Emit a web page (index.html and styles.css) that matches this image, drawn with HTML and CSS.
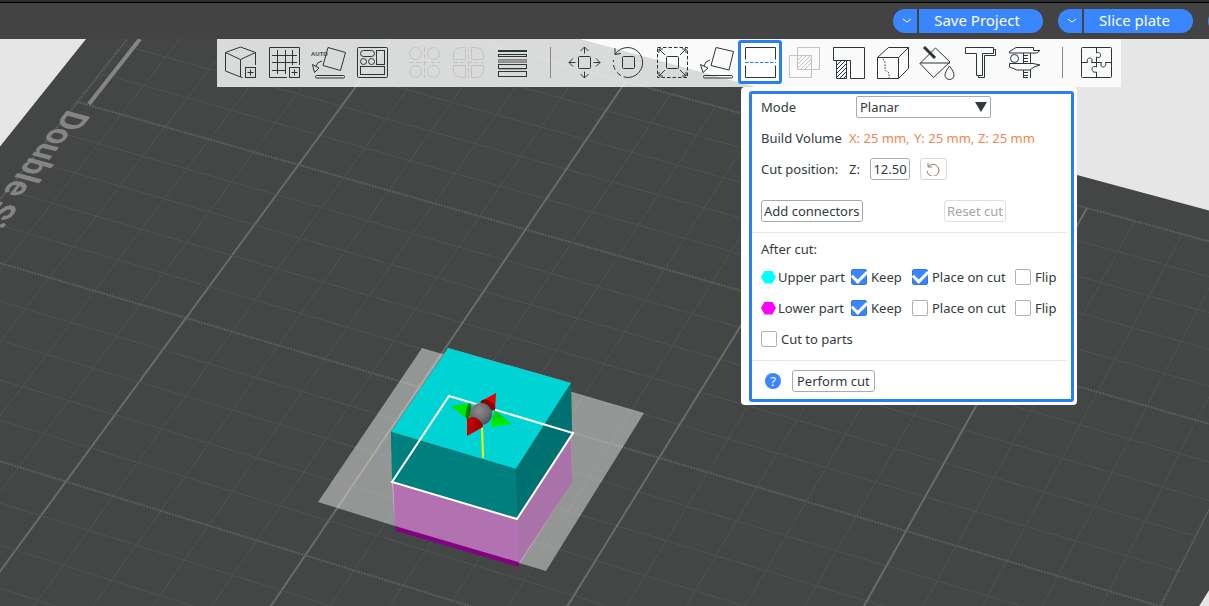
FILE: index.html
```html
<!DOCTYPE html>
<html lang="en">
<head>
<meta charset="utf-8">
<title>Cut tool</title>
<link rel="stylesheet" href="styles.css">
</head>
<body>
<header class="topbar">
  <div class="split">
    <button class="split-menu" aria-label="Save options"><svg width="10" height="6" viewBox="0 0 10 6"><path d="M1 1 5 4 9 1"/></svg></button>
    <button class="split-main save">Save Project</button>
  </div>
  <div class="split">
    <button class="split-menu" aria-label="Slice options"><svg width="10" height="6" viewBox="0 0 10 6"><path d="M1 1 5 4 9 1"/></svg></button>
    <button class="split-main slice">Slice plate</button>
  </div>
  <div class="split next"><button class="split-menu" aria-label="Print options"></button></div>
</header>

<main class="viewport">
  <svg class="scene" viewBox="0 39 1209 567" preserveAspectRatio="xMinYMin slice" role="img" aria-label="Build plate with a cube being cut">
    <defs>
      <radialGradient id="ball" cx=".42" cy=".35" r=".7"><stop offset="0" stop-color="#8d8d8d"/><stop offset=".6" stop-color="#6b6b6b"/><stop offset="1" stop-color="#4a4a4a"/></radialGradient>
      <linearGradient id="redcone"><stop offset="0" stop-color="#c80000"/><stop offset="1" stop-color="#9c0000"/></linearGradient>
      <linearGradient id="greencone" x2="0" y2="1"><stop offset="0" stop-color="#00c800"/><stop offset="1" stop-color="#00f400"/></linearGradient>
    </defs>
    <polygon class="plate" points="-2,149 86,39 580,39 1077,175 1211,211 1211,587 1198,608 -2,608"/>
    <g id="grid"></g>
    <path class="plate-bar" d="M140 39 89 104"/>
    <text class="plate-text" transform="matrix(-.62 .785 -.965 -.262 68 109)">Double Si</text>
    <polygon class="bottom-strip" points="395,525 519,561 519,567 396,531"/>
    <polygon fill="#b272b2" points="392,482 518,519 518,562 395,526"/>
    <polygon fill="#a972a9" points="518,519 572,432 572,482 520,563 518,562"/>
    <path class="cut-plane" fill-rule="evenodd" d="M422 348 644 413 546 571 519 563 572 482 571 383 448 348 391 432 395 526 318 502Z"/>
    <polygon fill="#00d3d3" points="448,348 571,383 516,469 391,432"/>
    <polygon fill="#007f7f" points="391,432 516,469 518,519 392,482"/>
    <polygon fill="#007171" points="571,383 516,469 518,519 572,433"/>
    <polygon class="cut-outline" points="449,396 573,433 517,519 392,482"/>
    <path d="M482 426 483 458" stroke="#f5f500" stroke-width="2"/>
    <path d="M480 402 496 393 495 411Z" fill="#e60000"/>
    <ellipse cx="488" cy="405" rx="8" ry="4.500" fill="#8b0000" transform="rotate(30 488 405)"/>
    <path d="M451 406 470 403 467 419Z" fill="#00e800"/>
    <ellipse cx="468.500" cy="411" rx="2.500" ry="8" fill="#007f00" transform="rotate(10 468.500 411)"/>
    <circle cx="481" cy="414" r="11" fill="url(#ball)"/>
    <path d="M496 411 512 424 491 427Q491 417 496 411Z" fill="url(#greencone)"/>
    <path d="M467 436 467 419Q472 415 478 419 483 423 483 427Z" fill="url(#redcone)"/>
  </svg>

  <nav class="toolbar" aria-label="Tools">
    <button class="tool" aria-label="Add"><svg viewBox="0 0 32 32"><path d="M16.500 1 1.500 6.500V25l15 6V13.500L1.500 6.500M16.500 1l15 5.500V19M31.500 6.500l-15 7"/><rect x="21.500" y="21.500" width="10" height="10"/><path d="M23.500 26.500h6M26.500 23.500v6M16.500 31l2 .5"/></svg></button>
    <button class="tool" aria-label="Add plate"><svg viewBox="0 0 32 32"><path d="M31.500 19V1.500h-30v30H19M9.500 4v24M17.500 4v24M24.500 4v15M4 9.500h25M4 16.500h25M4 24.500h14"/><rect x="21.500" y="21.500" width="10" height="10"/><path d="M23.500 26.500h6M26.500 23.500v6"/></svg></button>
    <button class="tool" aria-label="Auto orient"><svg viewBox="0 0 32 32"><text class="auto" x="-1" y="10">AUTO</text><path d="M16 1.500 33.500 6.500 28.500 24.500 11 19.500ZM10 15Q5 16 4 20M.5 18.500 7 22 2.500 26.500Z"/><rect x="3.500" y="29.500" width="29" height="2.500" rx="1"/></svg></button>
    <button class="tool" aria-label="Arrange"><svg viewBox="0 0 32 32"><rect x="1.500" y="1.500" width="30" height="30" rx="1"/><rect x="4.500" y="4.500" width="14" height="6" rx="3"/><rect x="20.500" y="4.500" width="8" height="14"/><circle cx="7.500" cy="15.500" r="3"/><circle cx="15.500" cy="15.500" r="3"/><rect x="4.500" y="20.500" width="24" height="8"/></svg></button>
    <span class="space"></span>
    <button class="tool" disabled aria-label="Split to objects"><svg viewBox="0 0 32 32"><circle cx="7.500" cy="7.500" r="6"/><circle cx="25.500" cy="7.500" r="6"/><circle cx="7.500" cy="25.500" r="6"/><circle cx="25.500" cy="25.500" r="6"/><path stroke-dasharray="5 2" d="M16.500 1v31M1 16.500h31"/></svg></button>
    <button class="tool" disabled aria-label="Split to parts"><svg viewBox="0 0 32 32"><path d="M13.500 1.500v12h-12V9Q2 2 9 1.500ZM19.500 1.500v12h12V9Q31 2 24 1.500ZM13.500 31.500v-12h-12V24Q2 31 9 31.500ZM19.500 31.500v-12h12V24Q31 31 24 31.500Z"/><path stroke-dasharray="5 2" d="M16.500 1v31M1 16.500h31"/></svg></button>
    <button class="tool" aria-label="Layer height"><svg viewBox="0 0 32 32"><path stroke-width="2" d="M2 5h29"/><rect x="2.500" y="8.500" width="28" height="2"/><rect x="2.500" y="13.500" width="28" height="3" fill="#999" stroke="#888"/><rect x="2.500" y="18.500" width="28" height="4"/><path stroke="#aaa" d="M3 23.500h27"/><rect x="2.500" y="25.500" width="28" height="5"/></svg></button>
    <span class="rule"></span>
    <button class="tool" aria-label="Move"><svg viewBox="0 0 32 32"><rect x="10.500" y="10.500" width="12" height="12" rx="1"/><path d="M16.500 7.500V1M12.500 5l4-4 4 4M16.500 25.500V32M12.500 28l4 4 4-4M7.500 16.500H1M5 12.500l-4 4 4 4M25.500 16.500H32M28 12.500l4 4-4 4"/></svg></button>
    <button class="tool" aria-label="Rotate"><svg viewBox="0 0 32 32"><rect x="10.500" y="10.500" width="12" height="12" rx="1"/><path d="M3 8.500A15 15 0 1 1 16.500 31.500M3 2v6.500l6-1"/><path stroke-dasharray="5 3" d="M16.500 31.500A15 15 0 0 1 1.500 14"/></svg></button>
    <button class="tool" aria-label="Scale"><svg viewBox="0 0 32 32"><rect x="1.500" y="1.500" width="30" height="30" stroke-dasharray="3.500 2"/><rect x="10.500" y="10.500" width="12" height="12" rx="1"/><path d="M9 9 3 3M3 7V3h4M24 9l6-6M26 3h4v4M9 24l-6 6M3 26v4h4M24 24l6 6M26 30h4v-4"/></svg></button>
    <button class="tool" aria-label="Lay on face"><svg viewBox="0 0 32 32"><path d="M16 1.500 33.500 5.500 29 24 11 19.500ZM10 14Q5 15 4 20M.5 18.500 8 22 3 26.500Z"/><rect x="3.500" y="29.500" width="29" height="2.500" rx="1"/></svg></button>
    <button class="tool active" aria-label="Cut" aria-pressed="true"><svg viewBox="0 0 32 32"><path d="M1.500 13.500v-12h30v12M1.500 19.500v12h30v-12"/><path stroke="#267ff5" stroke-dasharray="3.500 1.500" d="M1 16.500h31"/></svg></button>
    <button class="tool" disabled aria-label="Mesh boolean"><svg viewBox="0 0 32 32"><rect x="9.500" y="1.500" width="22" height="22"/><rect x="1.500" y="9.500" width="22" height="22"/><path d="M10 14l4-4M10 18l8-8M10 22l12-12M13 23l10-10M17 23l6-6"/></svg></button>
    <button class="tool" aria-label="Supports painting"><svg viewBox="0 0 32 32"><path d="M1.500 1.500h31v31h-14v-18h-17Z"/><path d="M4.500 14.500v18h10v-18M5 19l4-4M5 23l8-8M5 27l9-9M5 31l9-9M8 32l6-6M12 32l2-2"/></svg></button>
    <button class="tool" aria-label="Seam painting"><svg viewBox="0 0 32 32"><path d="M1.500 11.500h21v21h-21ZM1.500 11.500l11-10h20l-10 10M32.500 1.500v21l-10 10"/><path stroke-dasharray="1.500 1.500" d="M7 13l2 3v8l4 3v5"/></svg></button>
    <button class="tool" aria-label="Color painting"><svg viewBox="0 0 32 32"><path d="M15.500 2 30 16 13.500 31.500 0 17.500ZM0 17h30"/><path stroke-width="3" d="M4 1l11 11"/><path d="M29.500 20Q25 26 25 29a4.500 4.500 0 0 0 9 0Q34 26 29.500 20Z" fill="#fafafa"/></svg></button>
    <button class="tool" aria-label="Text"><svg viewBox="0 0 32 32"><path d="M1.500 1.500h28v6h-11v22h-6v-22h-11Z"/><path d="M29.500 3.500h2v6h-11v22h-6v-2"/></svg></button>
    <button class="tool" aria-label="Measure"><svg viewBox="0 0 32 32"><path d="M1.500 5.500 8 1.500h17.500v3H32l-3 2.500H1.500ZM1.500 17.500H25l7 1.500-6 2-4 3H9l-7.500-3ZM15.500 7v10M22.500 7v10M15.500 24v8M22.500 24v8M16 9.500h4M16 12.500h4M16 15.500h4M16 26.500h4M16 29.500h4M16 31.500h4"/><circle cx="6.500" cy="12.500" r="4"/></svg></button>
    <span class="rule"></span>
    <button class="tool" aria-label="Assembly view"><svg viewBox="0 0 32 32"><rect x="1.500" y="1.500" width="30" height="30" rx="1"/><path d="M16.500 1.500V7c5-3 6 7 0 4v5.500H11.500c3-6-6-6-4 0h-6M16.500 16.500h5c-3 6 6 6 4 0h6M16.500 16.500V21c-6-3-6 7 0 5v5.500"/></svg></button>
  </nav>

  <section class="panel" aria-label="Cut">
    <div class="panel-frame">
      <div class="fields">
        <div class="row mode-row">
          <label for="mode">Mode</label>
          <div class="select-box">
            <select id="mode"><option>Planar</option><option>Dovetail</option></select>
            <svg width="12" height="10" viewBox="0 0 12 10"><path d="M0 0h12L6 10Z"/></svg>
          </div>
        </div>
        <div class="row field-row"><span>Build Volume</span><div class="volume"><span>X: 25 mm,</span><span>Y: 25 mm,</span><span>Z: 25 mm</span></div></div>
        <div class="row field-row">
          <span>Cut position:</span>
          <div class="position">
            <label for="z">Z:</label>
            <input class="number" id="z" type="text" value="12.50">
            <button class="btn undo" aria-label="Reset position"><svg width="14" height="14" viewBox="0 0 14 14"><path d="M2 1v4h4M2 5a6 6 0 1 1-1 4"/></svg></button>
          </div>
        </div>
      </div>
      <div class="actions"><button class="btn">Add connectors</button><button class="btn reset" disabled>Reset cut</button></div>
      <hr>
      <div class="row after">After cut:</div>
      <div class="parts">
        <div class="row part-row">
          <span class="part"><i class="hex upper"></i>Upper part</span>
          <label class="check"><input type="checkbox" checked>Keep</label>
          <label class="check"><input type="checkbox" checked>Place on cut</label>
          <label class="check"><input type="checkbox">Flip</label>
        </div>
        <div class="row part-row">
          <span class="part"><i class="hex lower"></i>Lower part</span>
          <label class="check"><input type="checkbox" checked>Keep</label>
          <label class="check"><input type="checkbox">Place on cut</label>
          <label class="check"><input type="checkbox">Flip</label>
        </div>
        <div class="row"><label class="check"><input type="checkbox">Cut to parts</label></div>
      </div>
      <hr>
      <div class="footer"><button class="help" aria-label="Help">?</button><button class="btn perform">Perform cut</button></div>
    </div>
  </section>
</main>
<script src="grid.js"></script>
</body>
</html>
```
FILE: styles.css
```css
* { box-sizing: border-box; }

body {
  margin: 0;
  min-height: 100vh;
  display: flex;
  flex-direction: column;
  overflow: hidden;
  font: 13px/20px "Noto Sans", "Open Sans", sans-serif;
  color: #323a3d;
}

button, input, select { font: inherit; color: inherit; margin: 0; }
button { padding: 0; }

.topbar {
  height: 39px;
  padding: 3px 0 0;
  display: flex;
  justify-content: flex-end;
  align-items: center;
  gap: 15px;
  overflow: hidden;
  background: linear-gradient(#2e2e2e 2px, #000 2px, #000 3px, #434343 3px);
}
.split { display: flex; gap: 2px; flex: none; }
.split.next { margin-right: -23px; }
.split-menu, .split-main {
  height: 24px;
  border: 0;
  background: #3a86ff;
  color: #fff;
}
.split-menu {
  width: 24px;
  border-radius: 12px 0 0 12px;
  padding-left: 3px;
}
.split-menu svg { display: block; margin: auto; fill: none; stroke: #fff; }
.split-main {
  border-radius: 0 12px 12px 0;
  font-size: 15px;
  line-height: 22px;
  padding: 0 8px 2px 0;
}
.save { width: 124px; }
.slice { width: 109px; }

.viewport {
  position: relative;
  flex: 1;
  display: flex;
  align-items: flex-start;
  padding-left: 217px;
  background: #e6e6e6;
}
.scene { position: absolute; inset: 0; width: 100%; height: 100%; }
.plate { fill: #444645; }
.line-minor { stroke: #4f534e; fill: none; }
.line-major { stroke: #6b6c67; stroke-width: 2; fill: none; }
.line-row { stroke: #5b6159; stroke-width: 2; stroke-dasharray: 2 1; fill: none; }
.plate-bar { stroke: #858585; stroke-width: 4; }
.plate-text { font: 700 34px Roboto, sans-serif; fill: #858585; }
.bottom-strip { fill: #840084; }
.cut-plane { fill: #fff; fill-opacity: .43; }
.cut-outline { fill: none; stroke: #fff; stroke-width: 2; }

.toolbar {
  position: relative;
  display: flex;
  height: 48px;
  padding: 1px 3px 3px 1px;
  background: rgba(255, 255, 255, .8);
}
.tool {
  width: 44px;
  height: 44px;
  border: 0;
  background: none;
  display: flex;
  align-items: center;
  justify-content: center;
}
.tool svg {
  width: 32px;
  height: 32px;
  flex: none;
  overflow: visible;
  fill: none;
  stroke: #2b3638;
}
.tool:disabled svg { stroke: #c3c3c3; }
.tool.active { border: 3px solid #267ff5; border-radius: 3px; background: #fff; }
.auto { font: 700 6px "Noto Sans", sans-serif; fill: #4a5355; stroke: none; }
.space { width: 8px; }
.rule { width: 1px; height: 31px; margin: 7px 11px 0 16px; background: #888; }

.panel {
  position: absolute;
  left: 741px;
  top: 48px;
  width: 336px;
  padding: 4px 3px 3px 8px;
  background: #fff;
  border-radius: 4px;
}
.panel-frame {
  border: 3px solid #267ff5;
  border-radius: 3px;
  padding: 2px 4px 7px 0;
}
.row { height: 22px; display: flex; align-items: center; white-space: nowrap; }
.fields, .parts { display: flex; flex-direction: column; gap: 9px; padding-left: 9px; }
.mode-row { display: grid; grid-template-columns: 95px 135px; }
.field-row { display: grid; grid-template-columns: 88px auto; }
.select-box { position: relative; }
.select-box select {
  display: block;
  appearance: none;
  width: 100%;
  height: 22px;
  padding: 0 3px;
  border: 1px solid #a9a9b5;
  border-radius: 2px;
  background: #fff;
}
.select-box svg { position: absolute; right: 4px; top: 6px; fill: #323a3d; pointer-events: none; }
.volume { display: grid; grid-template-columns: 65px 64px auto; color: #ef8550; }
.position { display: flex; align-items: center; }
.position label { width: 21px; }
.number, .btn {
  height: 22px;
  border: 1px solid #a9a9b5;
  border-radius: 3px;
  background: #fff;
}
.number { width: 40px; padding: 0; text-align: center; }
.btn { padding: 0 2px; line-height: 20px; white-space: nowrap; }
.undo { width: 27px; margin-left: 10px; border-color: #d5d5d8; }
.undo svg { display: block; margin-left: 3px; margin-right: auto; fill: none; stroke: #8b7c70; }
.actions {
  display: flex;
  justify-content: space-between;
  padding: 20px 61px 10px 9px;
}
.btn:disabled { color: #a3a5a6; border-color: #dedede; }
hr { margin: 0; border: 0; height: 1px; background: #e6e6e6; }
.after { margin: 5px 0 6px; padding-left: 9px; }
.part-row { display: grid; grid-template-columns: 90px 61px 103px auto; }
.part { display: flex; align-items: center; gap: 2px; }
.hex {
  width: 15px;
  height: 13px;
  clip-path: polygon(25% 0, 75% 0, 100% 50%, 75% 100%, 25% 100%, 0 50%);
}
.upper { background: #0ff; }
.lower { background: #f0f; }
.check { display: flex; align-items: center; gap: 4px; }
.check input {
  appearance: none;
  width: 16px;
  height: 16px;
  border: 1px solid #b0b0ba;
  border-radius: 2px;
  background: #fff;
  display: grid;
  place-items: center;
}
.check input:checked { background: #3a86ff; border-color: #3575d8; }
.check input:checked::after {
  content: "";
  width: 12px;
  height: 7px;
  margin-bottom: 4px;
  border: solid #fff;
  border-width: 0 0 3px 3px;
  transform: rotate(-45deg);
}
.parts + hr { margin-top: 10px; }
.footer { display: flex; align-items: center; gap: 11px; padding: 9px 13px 0; }
.help {
  width: 16px;
  height: 16px;
  border: 0;
  border-radius: 50%;
  background: #3a86ff;
  color: #fff;
  line-height: 16px;
}
.perform { padding: 0 4px; }
```
FILE: grid.js
```js
// Draws the build-plate grid in perspective.
// Corners of the plate area spanning major columns 1-4 and major rows 0-2.
const [p0, p1, p2, p3] = [[404, 21], [1087, 208], [906, 531], [186, 318]];

const dx1 = p1[0] - p2[0], dy1 = p1[1] - p2[1];
const dx2 = p3[0] - p2[0], dy2 = p3[1] - p2[1];
const sx = p0[0] - p1[0] + p2[0] - p3[0];
const sy = p0[1] - p1[1] + p2[1] - p3[1];
const det = dx1 * dy2 - dx2 * dy1;
const g = (sx * dy2 - dx2 * sy) / det;
const h = (dx1 * sy - sx * dy1) / det;

function project(column, row) {
  const s = (column - 1) / 3, t = row / 2;
  const w = 1 + g * s + h * t;
  return [0, 1].map(i =>
    (p0[i] + (p1[i] - p0[i] + g * p1[i]) * s + (p3[i] - p0[i] + h * p3[i]) * t) / w
  ).join(" ");
}

const grid = document.getElementById("grid");

function line(from, to, className) {
  const path = document.createElementNS("http://www.w3.org/2000/svg", "path");
  path.setAttribute("d", "M" + from + "L" + to);
  path.setAttribute("class", className);
  grid.append(path);
}

for (let i = 0; i <= 25; i++) {
  const edge = i % 25 === 0;
  const major = i % 5 === 0;
  line(project(i / 5, 0), project(i / 5, 5), edge ? "line-row" : major ? "line-major" : "line-minor");
  line(project(0, i / 5), project(5, i / 5), major ? "line-row" : "line-minor");
}
```
